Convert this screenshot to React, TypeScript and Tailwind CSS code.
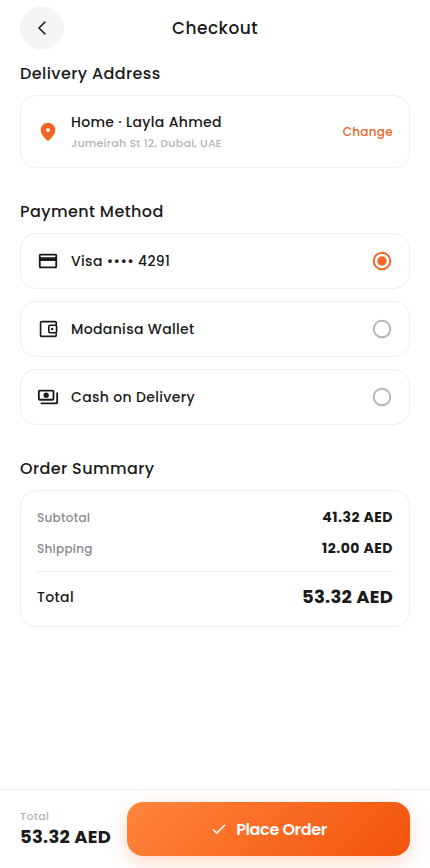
import React, { useState } from 'react';

const CardIcon = () => (
  <svg viewBox="0 0 24 24" className="size-[22px]" fill="currentColor">
    <path d="M20 4H4c-1.11 0-1.99.89-1.99 2L2 18c0 1.11.89 2 2 2h16c1.11 0 2-.89 2-2V6c0-1.11-.89-2-2-2zm0 14H4v-6h16v6zm0-10H4V6h16v2z" />
  </svg>
);

const WalletIcon = () => (
  <svg viewBox="0 0 24 24" className="size-[22px]" fill="none" stroke="currentColor" strokeWidth="1.8">
    <path d="M21 7.5V5.2A1.3 1.3 0 0 0 19.7 3.9H5.2A1.3 1.3 0 0 0 3.9 5.2v13.6a1.3 1.3 0 0 0 1.3 1.3h14.5a1.3 1.3 0 0 0 1.3-1.3V16.5" />
    <rect x="12.9" y="7.9" width="8.5" height="8.2" rx="1.3" />
    <circle cx="16.5" cy="12" r="1.3" fill="currentColor" stroke="none" />
  </svg>
);

const CashIcon = () => (
  <svg viewBox="0 0 24 24" className="size-[22px]" fill="currentColor">
    <path d="M19 14V6c0-1.1-.9-2-2-2H3c-1.1 0-2 .9-2 2v8c0 1.1.9 2 2 2h14c1.1 0 2-.9 2-2zm-2 0H3V6h14v8zm-7-7c-1.66 0-3 1.34-3 3s1.34 3 3 3 3-1.34 3-3-1.34-3-3-3zm13 0v11c0 1.1-.9 2-2 2H4v-2h17V7h2z" />
  </svg>
);

const methods = [
  { label: 'Visa •••• 4291', icon: CardIcon },
  { label: 'Modanisa Wallet', icon: WalletIcon },
  { label: 'Cash on Delivery', icon: CashIcon }
];

const charges = [
  { label: 'Subtotal', amount: '41.32 AED' },
  { label: 'Shipping', amount: '12.00 AED' }
];

const SectionTitle = ({ children }: { children: React.ReactNode }) => (
  <h2 className="h-6 whitespace-nowrap pt-px text-base leading-6 font-medium tracking-[0.4px]">{children}</h2>
);

const Radio = ({ checked }: { checked: boolean }) => (
  <svg viewBox="0 0 24 24" className={checked ? 'size-[22px] text-[#f26522]' : 'size-[22px] text-[#b5b5b5]'}>
    <circle cx="12" cy="12" r="9" fill="none" stroke="currentColor" strokeWidth="2.1" />
    {checked && <circle cx="12" cy="12" r="5.1" fill="currentColor" />}
  </svg>
);

export default function App() {
  const [selected, setSelected] = useState(0);

  return (
    <div className="flex h-[868px] w-full flex-col bg-white font-['Poppins','Inter',sans-serif] text-[#1a1a1a]">
      <header className="grid h-14 shrink-0 grid-cols-[44px_1fr_44px] items-center px-5">
        <button className="flex size-11 items-center justify-center rounded-full bg-[#f5f5f7]">
          <svg viewBox="0 0 24 24" className="size-[18px]" fill="none" stroke="currentColor" strokeWidth="2.1" strokeLinecap="round" strokeLinejoin="round">
            <path d="M16 4 8 12l8 8" />
          </svg>
        </button>
        <h1 className="text-center text-[17px] leading-6 font-medium tracking-[0.45px]">Checkout</h1>
      </header>

      <main className="flex flex-1 flex-col gap-[31px] px-5 pt-[5px]">
        <section className="flex flex-col gap-2.5">
          <SectionTitle>Delivery Address</SectionTitle>
          <div className="flex h-[73px] items-center gap-3 rounded-2xl border border-[#efefef] px-4">
            <svg viewBox="0 0 24 24" className="size-[22px] text-[#f26522]" fill="currentColor">
              <path d="M12 2c-4.2 0-8 3.22-8 8.2 0 3.18 2.45 6.92 7.34 11.23.38.33.95.33 1.33 0C17.55 17.12 20 13.38 20 10.2 20 5.22 16.2 2 12 2zm0 10c-1.1 0-2-.9-2-2s.9-2 2-2 2 .9 2 2-.9 2-2 2z" />
            </svg>
            <div className="flex-1 whitespace-nowrap">
              <p className="pt-px text-sm leading-[21px] font-medium tracking-[0.33px]">Home · Layla Ahmed</p>
              <p className="mt-px text-[11px] leading-[18px] font-medium tracking-[0.25px] text-[#b5b5b5]">Jumeirah St 12, Dubai, UAE</p>
            </div>
            <button className="text-xs font-medium tracking-[0.3px] text-[#e6682b]">Change</button>
          </div>
        </section>

        <section className="flex flex-col gap-2.5">
          <SectionTitle>Payment Method</SectionTitle>
          <div className="flex flex-col gap-3">
            {methods.map(({ label, icon: Icon }, index) => (
              <button
                key={label}
                onClick={() => setSelected(index)}
                className="flex h-14 items-center gap-3 rounded-2xl border border-[#efefef] px-4 text-left"
              >
                <Icon />
                <span className="flex-1 whitespace-nowrap text-sm font-medium tracking-[0.35px]">{label}</span>
                <Radio checked={selected === index} />
              </button>
            ))}
          </div>
        </section>

        <section className="flex flex-col gap-2.5">
          <SectionTitle>Order Summary</SectionTitle>
          <div className="h-[137px] rounded-2xl border border-[#efefef] p-4">
            <div className="flex flex-col gap-2.5">
              {charges.map((charge) => (
                <div key={charge.label} className="flex h-[21px] items-center justify-between">
                  <span className="text-xs font-medium tracking-[0.27px] text-[#8a8a8e]">{charge.label}</span>
                  <span className="pb-0.5 text-sm font-bold tracking-[0.5px]">{charge.amount}</span>
                </div>
              ))}
            </div>
            <div className="mt-3 flex h-[39px] items-center justify-between border-t border-[#ececec] pt-3">
              <span className="text-sm font-medium tracking-[0.35px]">Total</span>
              <span className="text-lg leading-[26px] font-bold tracking-[0.25px]">53.32 AED</span>
            </div>
          </div>
        </section>
      </main>

      <footer className="flex h-[79px] shrink-0 items-center overflow-hidden border-t border-[#ececec] px-5">
        <div className="w-[107px] whitespace-nowrap">
          <p className="-mt-px text-[11px] leading-4 font-medium tracking-[0.3px] text-[#b5b5b5]">Total</p>
          <p className="pt-px text-lg leading-6 font-bold tracking-[0.25px]">53.32 AED</p>
        </div>
        <button className="flex h-[54px] flex-1 items-center justify-center gap-2 rounded-2xl bg-linear-135 from-[#ff853d] via-[#f96b22] to-[#f1530b] text-white shadow-[0_6px_18px_rgba(242,101,34,0.25)]">
          <svg viewBox="0 0 24 24" className="size-[18px]" fill="none" stroke="currentColor" strokeWidth="2" strokeLinecap="round">
            <path d="M4.500 13l4.500 4.500L19.500 7" />
          </svg>
          <span className="pt-0.5 text-base font-semibold tracking-[-0.35px]">Place Order</span>
        </button>
      </footer>
    </div>
  );
}
